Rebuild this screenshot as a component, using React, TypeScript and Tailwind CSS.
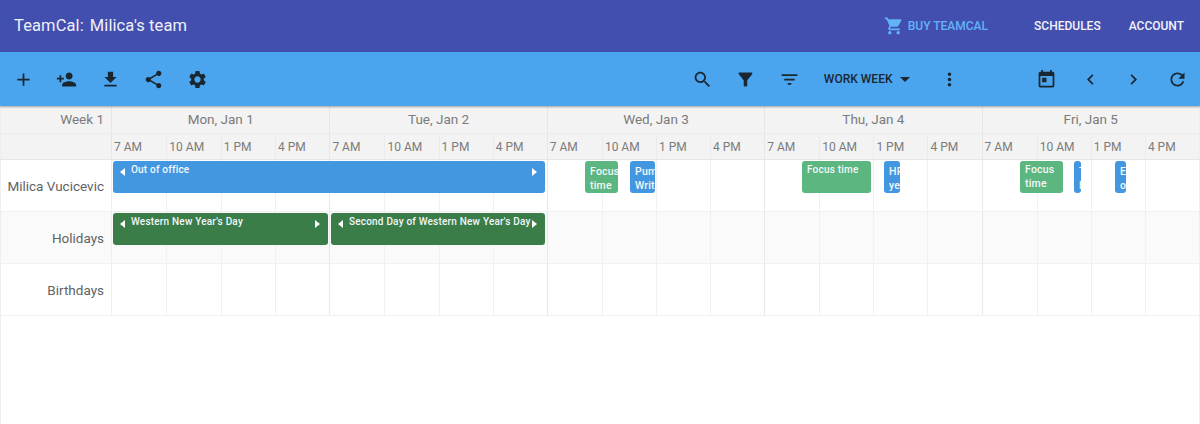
const P = {
  add: "M19 13h-6v6h-2v-6H5v-2h6V5h2v6h6v2z",
  personAdd: "M15 12c2.21 0 4-1.79 4-4s-1.79-4-4-4-4 1.79-4 4 1.79 4 4 4zm-9-2V7H4v3H1v2h3v3h2v-3h3v-2H6zm9 4c-2.67 0-8 1.34-8 4v2h16v-2c0-2.66-5.33-4-8-4z",
  download: "M19 9h-4V3H9v6H5l7 7 7-7zM5 18v2h14v-2H5z",
  share: "M18 16.08c-.76 0-1.44.3-1.96.77L8.91 12.7c.05-.23.09-.46.09-.7s-.04-.47-.09-.7l7.05-4.11c.54.5 1.25.81 2.04.81 1.66 0 3-1.34 3-3s-1.34-3-3-3-3 1.34-3 3c0 .24.04.47.09.7L8.04 9.81C7.5 9.31 6.79 9 6 9c-1.66 0-3 1.34-3 3s1.34 3 3 3c.79 0 1.5-.31 2.04-.81l7.12 4.16c-.05.21-.08.43-.08.65 0 1.61 1.31 2.92 2.92 2.92 1.61 0 2.92-1.31 2.92-2.92s-1.31-2.92-2.92-2.92z",
  settings: "M19.14 12.94c.04-.3.06-.61.06-.94 0-.32-.02-.64-.07-.94l2.03-1.58c.18-.14.23-.41.12-.61l-1.92-3.32c-.12-.22-.37-.29-.59-.22l-2.39.96c-.5-.38-1.03-.7-1.62-.94l-.36-2.54c-.04-.24-.24-.41-.48-.41h-3.84c-.24 0-.43.17-.47.41l-.36 2.54c-.59.24-1.13.57-1.62.94l-2.39-.96c-.22-.08-.47 0-.59.22L2.74 8.87c-.12.21-.08.47.12.61l2.03 1.58c-.05.3-.09.63-.09.94s.02.64.07.94l-2.03 1.58c-.18.14-.23.41-.12.61l1.92 3.32c.12.22.37.29.59.22l2.39-.96c.5.38 1.03.7 1.62.94l.36 2.54c.05.24.24.41.48.41h3.84c.24 0 .44-.17.47-.41l.36-2.54c.59-.24 1.13-.56 1.62-.94l2.39.96c.22.08.47 0 .59-.22l1.92-3.32c.12-.22.07-.47-.12-.61l-2.01-1.58zM12 15.6c-1.98 0-3.6-1.62-3.6-3.6s1.62-3.6 3.6-3.6 3.6 1.62 3.6 3.6-1.62 3.6-3.6 3.6z",
  search: "M15.5 14h-.79l-.28-.27C15.41 12.59 16 11.11 16 9.5 16 5.91 13.09 3 9.5 3S3 5.91 3 9.5 5.91 16 9.5 16c1.61 0 3.09-.59 4.23-1.57l.27.28v.79l5 4.99L20.49 19l-4.99-5zm-6 0C7.01 14 5 11.99 5 9.5S7.01 5 9.5 5 14 7.01 14 9.5 11.99 14 9.5 14z",
  funnel: "M4.25 5.61C6.27 8.2 10 13 10 13v6c0 .55.45 1 1 1h2c.55 0 1-.45 1-1v-6s3.72-4.8 5.74-7.39c.51-.66.04-1.61-.79-1.61H5.04c-.83 0-1.3.95-.79 1.61z",
  filterList: "M10 18h4v-2h-4v2zM3 6v2h18V6H3zm3 7h12v-2H6v2z",
  dropDown: "M7 10l5 5 5-5z",
  more: "M12 8c1.1 0 2-.9 2-2s-.9-2-2-2-2 .9-2 2 .9 2 2 2zm0 2c-1.1 0-2 .9-2 2s.9 2 2 2 2-.9 2-2-.9-2-2-2zm0 6c-1.1 0-2 .9-2 2s.9 2 2 2 2-.9 2-2-.9-2-2-2z",
  today: "M19 3h-1V1h-2v2H8V1H6v2H5c-1.11 0-1.99.9-1.99 2L3 19c0 1.1.89 2 2 2h14c1.1 0 2-.9 2-2V5c0-1.1-.9-2-2-2zm0 16H5V8h14v11zM7 10h5v5H7z",
  prev: "M15.41 7.41L14 6l-6 6 6 6 1.41-1.41L10.83 12z",
  next: "M10 6L8.59 7.41 13.17 12l-4.58 4.59L10 18l6-6z",
  refresh: "M17.65 6.35C16.2 4.9 14.21 4 12 4c-4.42 0-7.99 3.58-7.99 8s3.57 8 7.99 8c3.73 0 6.84-2.55 7.73-6h-2.08c-.82 2.33-3.04 4-5.65 4-3.31 0-6-2.69-6-6s2.69-6 6-6c1.66 0 3.14.69 4.22 1.78L13 11h7V4l-2.35 2.35z",
  cart: "M7 18c-1.1 0-1.99.9-1.99 2S5.9 22 7 22s2-.9 2-2-.9-2-2-2zM1 2v2h2l3.6 7.59-1.35 2.45c-.16.28-.25.61-.25.96 0 1.1.9 2 2 2h12v-2H7.42c-.14 0-.25-.11-.25-.25l.03-.12.9-1.83h7.45c.75 0 1.41-.41 1.75-1.03l3.58-6.47c.08-.14.12-.31.12-.48 0-.55-.45-1-1-1H5.21l-.94-2H1zm16 16c-1.1 0-1.99.9-1.99 2s.89 2 1.99 2 2-.9 2-2-.9-2-2-2z",
}

function Icon({ d, className = "h-[21px] w-[21px]" }: { d: string; className?: string }) {
  return (
    <svg viewBox="0 0 24 24" fill="currentColor" className={className}>
      <path d={d} />
    </svg>
  )
}

function ToolButton({ d }: { d: string }) {
  return (
    <button className="flex h-[44px] w-[43.5px] items-center justify-center text-[#1a2731]">
      <Icon d={d} />
    </button>
  )
}

const days = ["Mon, Jan 1", "Tue, Jan 2", "Wed, Jan 3", "Thu, Jan 4", "Fri, Jan 5"]
const hours = ["7 AM", "10 AM", "1 PM", "4 PM"]

type Ev = {
  left: number
  width: number
  color: string
  lines: string[]
  arrows?: boolean
  indent?: boolean
}

// x values are measured from the left edge of the timeline column (112px)
const rowEvents: Ev[][] = [
  [
    { left: 1, width: 432, color: "bg-[#4397e1]", lines: ["Out of office"], arrows: true },
    { left: 473, width: 33, color: "bg-[#5cb680]", lines: ["Focus", "time"], indent: true },
    { left: 518, width: 25, color: "bg-[#4397e1]", lines: ["Pump", "Write"], indent: true },
    { left: 690, width: 69, color: "bg-[#5cb680]", lines: ["Focus time"] },
    { left: 772, width: 16, color: "bg-[#4397e1]", lines: ["HR", "year"], indent: true },
    { left: 908, width: 43, color: "bg-[#5cb680]", lines: ["Focus", "time"] },
    { left: 962, width: 7, color: "bg-[#4397e1]", lines: ["T", "B"], indent: true },
    { left: 1003, width: 11, color: "bg-[#4397e1]", lines: ["E", "o"], indent: true },
  ],
  [
    { left: 1, width: 215, color: "bg-[#3a7d49]", lines: ["Western New Year's Day"], arrows: true },
    { left: 219, width: 214, color: "bg-[#3a7d49]", lines: ["Second Day of Western New Year's Day"], arrows: true },
  ],
  [],
]

function Event({ ev }: { ev: Ev }) {
  return (
    <div
      className={`absolute top-[1px] h-[32px] overflow-hidden rounded-[3px] text-[#f2f7fb] ${ev.color}`}
      style={{ left: ev.left, width: ev.width }}
    >
      {ev.arrows && (
        <>
          <span className="absolute left-[7px] top-[7px] h-0 w-0 border-y-[4px] border-r-[5px] border-y-transparent border-r-white" />
          <span className="absolute right-[8px] top-[7px] h-0 w-0 border-y-[4px] border-l-[5px] border-y-transparent border-l-white" />
        </>
      )}
      <div
        className={`whitespace-nowrap font-medium tracking-[0.2px] leading-[14px] ${
          ev.lines.length > 1 ? "text-[10.5px]" : "text-[10px]"
        } ${ev.arrows ? "pl-[18px]" : "pl-[5px]"} ${ev.indent ? "pt-[4px]" : "pt-[2px]"}`}
      >
        {ev.lines.map((l) => (
          <div key={l}>{l}</div>
        ))}
      </div>
    </div>
  )
}

function Row({ name, events, shaded }: { name: string; events: Ev[]; shaded: boolean }) {
  return (
    <div className={`flex h-[52px] border-b border-[#f1f1f1] ${shaded ? "bg-[#fafafa]" : "bg-white"}`}>
      <div className="flex w-[111px] shrink-0 items-center justify-end border-r border-[#eeeeee] pr-[7px] pt-[1px] text-[13.5px] text-[#636363]">
        {name}
      </div>
      <div className="relative flex-1">
        <div className="grid h-full grid-cols-5">
          {days.map((day) => (
            <div key={day} className="grid grid-cols-4 border-l border-[#e9e9e9] first:border-l-0">
              {hours.map((h) => (
                <div key={h} className="border-l border-[#f1f1f1] first:border-l-0" />
              ))}
            </div>
          ))}
        </div>
        {events.map((ev) => (
          <Event key={ev.left} ev={ev} />
        ))}
      </div>
    </div>
  )
}

export default function App() {
  return (
    <div className="h-[424px] w-[1200px] overflow-hidden bg-white font-['Roboto',sans-serif]">
      <header className="flex h-[52px] items-center bg-[#434faf] pl-[14px] pr-[16px] text-white">
        <div className="flex gap-[6px] text-[16.5px] tracking-[0.1px] text-[#eff0f9]">
          <span>TeamCal:</span>
          <span>Milica's team</span>
        </div>
        <nav className="ml-auto flex items-center text-[12px] font-medium text-[#f2f3fb]">
          <a className="flex items-center gap-[4px] text-[#62b3f5]">
            <Icon d={P.cart} className="h-[20px] w-[20px]" />
            BUY TEAMCAL
          </a>
          <a className="ml-[46px]">SCHEDULES</a>
          <a className="ml-[28px]">ACCOUNT</a>
        </nav>
      </header>

      <div className="relative z-10 flex h-[54px] items-center bg-[#4aa5ee] pl-[1.5px] pr-[1px] shadow-[0_1px_2px_rgba(0,0,0,0.35)]">
        <ToolButton d={P.add} />
        <ToolButton d={P.personAdd} />
        <ToolButton d={P.download} />
        <ToolButton d={P.share} />
        <ToolButton d={P.settings} />
        <div className="ml-auto flex items-center">
          <ToolButton d={P.search} />
          <ToolButton d={P.funnel} />
          <ToolButton d={P.filterList} />
          <button className="ml-[13px] flex items-center text-[12px] font-medium text-[#1a2731]">
            WORK WEEK
            <Icon d={P.dropDown} className="h-[24px] w-[24px]" />
          </button>
          <span className="ml-[11px]">
            <ToolButton d={P.more} />
          </span>
          <span className="ml-[54px] flex">
            <ToolButton d={P.today} />
            <ToolButton d={P.prev} />
            <ToolButton d={P.next} />
            <ToolButton d={P.refresh} />
          </span>
        </div>
      </div>

      <div className="border-x border-[#eeeeee]">
        <div className="flex h-[28px] border-b border-[#ececec] bg-[#f3f3f3] text-[13.5px] text-[#7b7b7b]">
          <div className="flex w-[111px] shrink-0 items-center justify-end border-r border-[#e6e6e6] pr-[7px]">Week 1</div>
          <div className="grid flex-1 grid-cols-5">
            {days.map((day) => (
              <div key={day} className="flex items-center justify-center border-l border-[#e6e6e6] first:border-l-0">
                {day}
              </div>
            ))}
          </div>
        </div>

        <div className="flex h-[26px] border-b border-[#e6e6e6] bg-[#f3f3f3] text-[12px] text-[#7b7b7b]">
          <div className="w-[111px] shrink-0 border-r border-[#e6e6e6]" />
          <div className="grid flex-1 grid-cols-5">
            {days.map((day) => (
              <div key={day} className="grid grid-cols-4 border-l border-[#e6e6e6] first:border-l-0">
                {hours.map((h) => (
                  <div key={h} className="flex items-center border-l border-[#ebebeb] pl-[2px] pt-[1px] first:border-l-0">
                    {h}
                  </div>
                ))}
              </div>
            ))}
          </div>
        </div>

        <Row name="Milica Vucicevic" events={rowEvents[0]} shaded={false} />
        <Row name="Holidays" events={rowEvents[1]} shaded />
        <Row name="Birthdays" events={rowEvents[2]} shaded={false} />
        <div className="h-[110px]" />
      </div>
    </div>
  )
}
